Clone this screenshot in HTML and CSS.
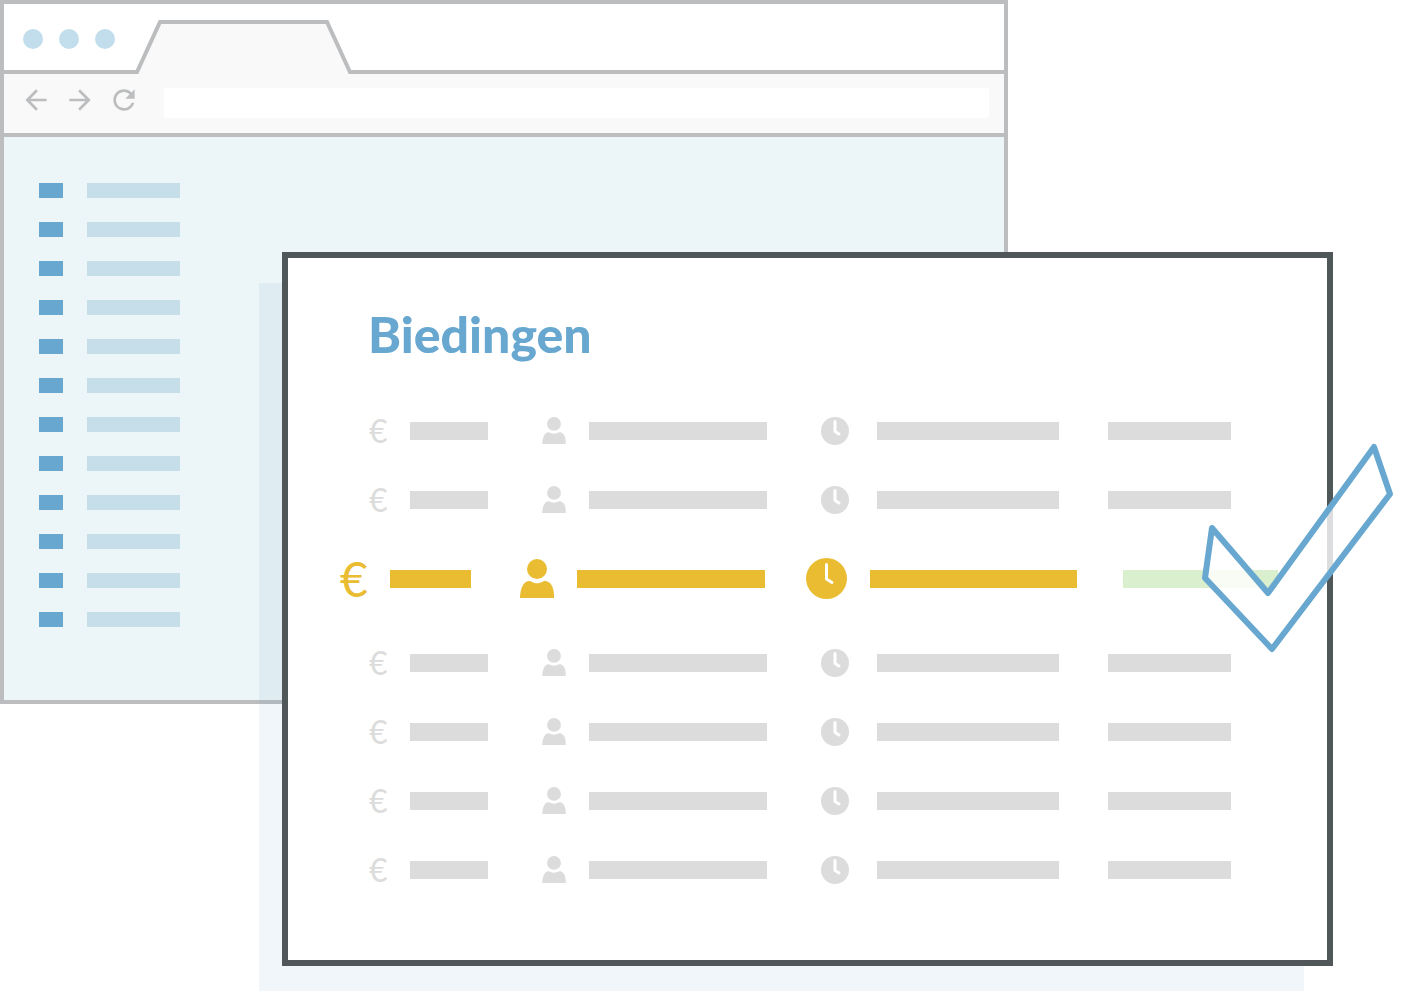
FILE: index.html
```
<!DOCTYPE html>
<html lang="nl">
<head>
    <meta charset="UTF-8">
    <meta name="viewport" content="width=device-width, initial-scale=1.0">
    <title>Biedingen</title>
    <link rel="stylesheet" href="styles.css">
</head>
<body>
    <!-- shared icons -->
    <svg class="sprite" aria-hidden="true">
        <symbol id="user" viewBox="0 0 34 39">
            <circle cx="17" cy="10" r="10"/>
            <path d="M0 39C.3 30 3 22.500 9 22c2.500 0 4 2.300 8 2.300S22.500 22 25.500 22C31 22.500 34 29 34 36v3z"/>
        </symbol>
        <symbol id="clock" viewBox="0 0 28 28">
            <circle cx="14" cy="14" r="14"/>
            <path class="hands" d="M14 4.500V14.500l4 2.500"/>
        </symbol>
        <symbol id="clock-large" viewBox="0 0 41 41">
            <circle cx="20.500" cy="20.500" r="20.500"/>
            <path class="hands" d="M20.500 6.500V21l5.500 3.500"/>
        </symbol>
    </svg>

    <main class="stage">
        <section class="browser">
            <div class="tab-strip">
                <div class="dots"><span></span><span></span><span></span></div>
                <svg class="tab" viewBox="0 0 218 54" aria-hidden="true">
                    <polygon points="2,54 25,2 192,2 215,54"/>
                    <polyline points="0,52 2,52 25,2 192,2 215,52 218,52"/>
                </svg>
            </div>
            <div class="toolbar">
                <button type="button" aria-label="Vorige">
                    <svg viewBox="0 0 24 24"><path d="M20 11H7.830l5.590-5.590L12 4l-8 8 8 8 1.410-1.410L7.830 13H20z"/></svg>
                </button>
                <button type="button" aria-label="Volgende">
                    <svg viewBox="0 0 24 24"><path d="M12 4l-1.410 1.410L16.170 11H4v2h12.170l-5.580 5.590L12 20l8-8z"/></svg>
                </button>
                <button type="button" aria-label="Vernieuwen">
                    <svg viewBox="0 0 24 24"><path d="M17.650 6.350C16.200 4.900 14.210 4 12 4c-4.420 0-7.990 3.580-7.990 8s3.570 8 7.990 8c3.730 0 6.840-2.550 7.730-6h-2.080c-.82 2.330-3.040 4-5.650 4-3.310 0-6-2.690-6-6s2.690-6 6-6c1.660 0 3.140.69 4.220 1.780L13 11h7V4z"/></svg>
                </button>
                <input type="text" class="address" aria-label="Adres">
            </div>
            <ul class="side-menu">
                <li></li><li></li><li></li><li></li><li></li><li></li>
                <li></li><li></li><li></li><li></li><li></li><li></li>
            </ul>
        </section>

        <section class="panel">
            <h1>Biedingen</h1>
            <ul class="bids">
                <li class="bid">
                    <div class="cell"><span class="euro">€</span><span class="bar"></span></div>
                    <div class="cell person"><svg class="user"><use href="#user"/></svg><span class="bar"></span></div>
                    <div class="cell time"><svg class="clock"><use href="#clock"/></svg><span class="bar"></span></div>
                    <div class="cell status"><span class="bar"></span></div>
                </li>
                <li class="bid">
                    <div class="cell"><span class="euro">€</span><span class="bar"></span></div>
                    <div class="cell person"><svg class="user"><use href="#user"/></svg><span class="bar"></span></div>
                    <div class="cell time"><svg class="clock"><use href="#clock"/></svg><span class="bar"></span></div>
                    <div class="cell status"><span class="bar"></span></div>
                </li>
                <li class="bid winner">
                    <div class="cell"><span class="euro">€</span><span class="bar"></span></div>
                    <div class="cell person"><svg class="user"><use href="#user"/></svg><span class="bar"></span></div>
                    <div class="cell time"><svg class="clock"><use href="#clock-large"/></svg><span class="bar"></span></div>
                    <div class="cell status"><span class="bar"></span></div>
                    <svg class="check" viewBox="0 0 200 216" aria-hidden="true">
                        <polygon points="12,88 68,153 174,7 190,54 72,209 5,138"/>
                    </svg>
                </li>
                <li class="bid">
                    <div class="cell"><span class="euro">€</span><span class="bar"></span></div>
                    <div class="cell person"><svg class="user"><use href="#user"/></svg><span class="bar"></span></div>
                    <div class="cell time"><svg class="clock"><use href="#clock"/></svg><span class="bar"></span></div>
                    <div class="cell status"><span class="bar"></span></div>
                </li>
                <li class="bid">
                    <div class="cell"><span class="euro">€</span><span class="bar"></span></div>
                    <div class="cell person"><svg class="user"><use href="#user"/></svg><span class="bar"></span></div>
                    <div class="cell time"><svg class="clock"><use href="#clock"/></svg><span class="bar"></span></div>
                    <div class="cell status"><span class="bar"></span></div>
                </li>
                <li class="bid">
                    <div class="cell"><span class="euro">€</span><span class="bar"></span></div>
                    <div class="cell person"><svg class="user"><use href="#user"/></svg><span class="bar"></span></div>
                    <div class="cell time"><svg class="clock"><use href="#clock"/></svg><span class="bar"></span></div>
                    <div class="cell status"><span class="bar"></span></div>
                </li>
                <li class="bid">
                    <div class="cell"><span class="euro">€</span><span class="bar"></span></div>
                    <div class="cell person"><svg class="user"><use href="#user"/></svg><span class="bar"></span></div>
                    <div class="cell time"><svg class="clock"><use href="#clock"/></svg><span class="bar"></span></div>
                    <div class="cell status"><span class="bar"></span></div>
                </li>
            </ul>
        </section>
    </main>
</body>
</html>
```
FILE: styles.css
```
* {
    box-sizing: border-box;
}
body {
    font-family: Lato, sans-serif;
    background-color: #ffffff;
    margin: 0;
}
ul {
    list-style: none;
    margin: 0;
    padding: 0;
}
.sprite {
    display: none;
}

/* both windows share one grid cell, so the panel overlaps the browser */
.stage {
    display: grid;
    grid-template-columns: minmax(0, 1fr);
    align-items: start;
}
.browser,
.panel {
    grid-area: 1 / 1;
}

/* browser window */
.browser {
    margin-right: 402px;
    border: 4px solid #bbbdbe;
    background-color: #ecf5f8;
}
.tab-strip {
    display: flex;
    align-items: flex-end;
    gap: 20px;
    height: 70px;
    padding-left: 19px;
    background-color: #ffffff;
    border-bottom: 4px solid #bbbdbe;
}
.dots {
    display: flex;
    gap: 16px;
    margin-bottom: 21px;
}
.dots span {
    width: 20px;
    height: 20px;
    border-radius: 50%;
    background-color: #c2deec;
}
.tab {
    width: 218px;
    height: 54px;
    margin-bottom: -4px;
}
.tab polygon {
    fill: #f9f9f9;
}
.tab polyline {
    fill: none;
    stroke: #bbbdbe;
    stroke-width: 4;
}
.toolbar {
    display: flex;
    align-items: flex-start;
    gap: 12px;
    padding: 10px 15px 15px 16px;
    background-color: #f9f9f9;
    border-bottom: 4px solid #bbbdbe;
}
.toolbar button {
    width: 32px;
    height: 32px;
    padding: 0;
    border: none;
    background: none;
    cursor: pointer;
}
.toolbar svg {
    display: block;
    width: 32px;
    height: 32px;
    fill: #bbbdbe;
}
.address {
    flex: 1;
    min-width: 0;
    height: 30px;
    margin: 4px 0 0 12px;
    border: none;
    border-radius: 2px;
    background-color: #ffffff;
}
.side-menu {
    display: flex;
    flex-direction: column;
    gap: 24px;
    padding: 46px 35px 73px;
}
.side-menu li {
    display: flex;
    gap: 24px;
    height: 15px;
}
.side-menu li::before {
    content: "";
    width: 24px;
    background-color: #68a8d0;
}
.side-menu li::after {
    content: "";
    width: 93px;
    background-color: #c5deea;
}

/* bids panel */
.panel {
    margin: 252px 77px 39px 282px;
    padding: 47px 96px 56px 80px;
    border: 6px solid #505759;
    background-color: #ffffff;
    box-shadow: -26px 28px 0 -3px rgba(104, 168, 208, 0.1);
}
h1 {
    margin: 0 0 33px;
    font-size: 50px;
    font-weight: 900;
    line-height: 58px;
    color: #68a8d0;
}
.bids {
    padding-left: 1px;
}
.bid {
    display: grid;
    grid-template-columns: minmax(0, 173fr) minmax(0, 279fr) minmax(0, 287fr) minmax(0, 123fr);
    align-items: center;
    height: 69px;
    color: #dcdcdc;
}
.cell {
    display: flex;
    align-items: center;
    gap: 23px;
    padding-right: 54px;
}
.time {
    gap: 28px;
    padding-right: 49px;
}
.status {
    padding-right: 0;
}
.bar {
    flex: 1;
    height: 18px;
    background-color: currentColor;
}
.euro {
    width: 18px;
    font-size: 32px;
    line-height: 32px;
}
.user,
.clock {
    flex: none;
    fill: currentColor;
}
.user {
    width: 24px;
    height: 27px;
}
.clock {
    width: 28px;
    height: 28px;
}
.hands {
    fill: none;
    stroke: #ffffff;
    stroke-width: 3;
    stroke-linecap: round;
    stroke-linejoin: round;
}

/* winning bid */
.winner {
    position: relative;
    grid-template-columns: minmax(0, 180fr) minmax(0, 286fr) minmax(0, 317fr) minmax(0, 155fr);
    height: 94px;
    margin: 0 -47px 0 -29px;
    padding-bottom: 5px;
    color: #eabc32;
}
.winner .cell {
    gap: 23px;
    padding-right: 49px;
}
.winner .person {
    padding-right: 41px;
}
.winner .time {
    padding-right: 46px;
}
.winner .status {
    padding-right: 0;
    color: #daefce;
}
.winner .euro {
    width: 27px;
    font-size: 48px;
    line-height: 48px;
}
.winner .user {
    width: 34px;
    height: 39px;
}
.winner .clock {
    width: 41px;
    height: 41px;
}
.check {
    position: absolute;
    top: -94px;
    right: -122px;
    width: 200px;
    height: 216px;
}
.check polygon {
    fill: rgba(255, 255, 255, 0.8);
    stroke: #68a8d0;
    stroke-width: 6;
    stroke-linejoin: round;
}
```
